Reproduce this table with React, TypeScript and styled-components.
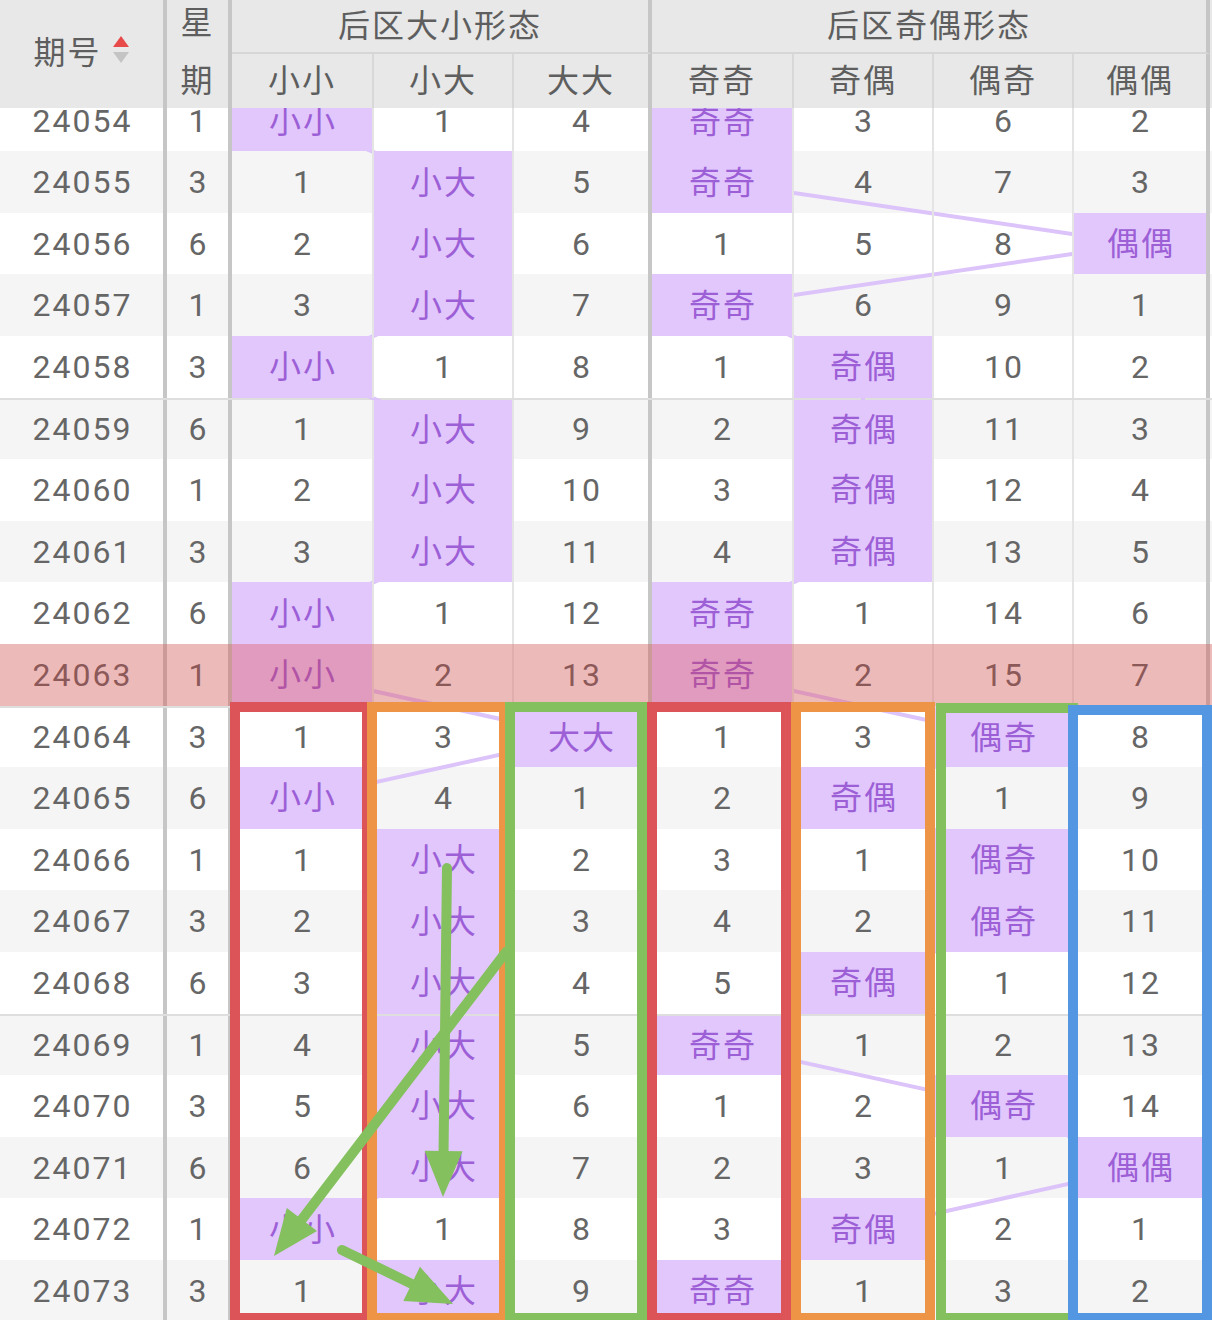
import React from "react";
import styled, { createGlobalStyle } from "styled-components";

const GlobalStyle = createGlobalStyle`
  html, body { margin: 0; padding: 0; background: #ffffff; }
  body { font-family: Roboto, "Noto Sans CJK SC", sans-serif; }
`;

type Divider = "thick" | "thin";
const COLS: { w: number; d: Divider }[] = [
  { w: 167, d: "thick" },
  { w: 65, d: "thick" },
  { w: 142, d: "thin" },
  { w: 140, d: "thin" },
  { w: 138, d: "thick" },
  { w: 142, d: "thin" },
  { w: 140, d: "thin" },
  { w: 140, d: "thin" },
  { w: 136, d: "thick" },
];
const bw = (d: Divider) => (d === "thick" ? 4 : 2);
const TEMPLATE = COLS.map((c) => `${c.w}px`).join(" ");
const LEFTS = COLS.reduce<number[]>((acc, c, i) => {
  acc.push(i === 0 ? 0 : acc[i - 1] + COLS[i - 1].w);
  return acc;
}, []);
const centerX = (ci: number) => LEFTS[ci] + (COLS[ci].w - bw(COLS[ci].d)) / 2;

const ROW_H = 61.6;
const LABELS = ["小小", "小大", "大大", "奇奇", "奇偶", "偶奇", "偶偶"];
const SUB_HEAD = LABELS;

const DATA: [number, number, number[]][] = [
  [24054, 1, [0, 1, 4, 0, 3, 6, 2]],
  [24055, 3, [1, 0, 5, 0, 4, 7, 3]],
  [24056, 6, [2, 0, 6, 1, 5, 8, 0]],
  [24057, 1, [3, 0, 7, 0, 6, 9, 1]],
  [24058, 3, [0, 1, 8, 1, 0, 10, 2]],
  [24059, 6, [1, 0, 9, 2, 0, 11, 3]],
  [24060, 1, [2, 0, 10, 3, 0, 12, 4]],
  [24061, 3, [3, 0, 11, 4, 0, 13, 5]],
  [24062, 6, [0, 1, 12, 0, 1, 14, 6]],
  [24063, 1, [0, 2, 13, 0, 2, 15, 7]],
  [24064, 3, [1, 3, 0, 1, 3, 0, 8]],
  [24065, 6, [0, 4, 1, 2, 0, 1, 9]],
  [24066, 1, [1, 0, 2, 3, 1, 0, 10]],
  [24067, 3, [2, 0, 3, 4, 2, 0, 11]],
  [24068, 6, [3, 0, 4, 5, 0, 1, 12]],
  [24069, 1, [4, 0, 5, 0, 1, 2, 13]],
  [24070, 3, [5, 0, 6, 1, 2, 0, 14]],
  [24071, 6, [6, 0, 7, 2, 3, 1, 0]],
  [24072, 1, [0, 1, 8, 3, 0, 2, 1]],
  [24073, 3, [1, 0, 9, 0, 1, 3, 2]],
];
const PINK_ROW = 24063;

const Page = styled.div`
  position: relative;
  width: 1212px;
  height: 1320px;
  overflow: hidden;
  background: #ffffff;
  font-size: 32px;
  letter-spacing: 2px;
  color: #666666;
`;

const Header = styled.div`
  position: relative;
  z-index: 5;
  display: grid;
  grid-template-columns: ${TEMPLATE};
  grid-template-rows: 54px 54px;
  background: #e8e8e8;
  color: #5e5e5e;
`;

const HeadCell = styled.div<{ $d: Divider; $col: string; $row: string; $bottom?: boolean }>`
  grid-column: ${(p) => p.$col};
  grid-row: ${(p) => p.$row};
  box-sizing: border-box;
  display: flex;
  align-items: center;
  justify-content: center;
  padding-bottom: 6px;
  border-right: ${(p) => (p.$d === "thick" ? "4px solid #c6c6c6" : "2px solid #d8d8d8")};
  border-bottom: ${(p) => (p.$bottom ? "2px solid #d6d6d6" : "none")};
  white-space: nowrap;
`;

const IssueHead = styled(HeadCell)`
  gap: 10px;
  padding-bottom: 8px;
`;

const WeekHead = styled(HeadCell)`
  flex-direction: column;
  gap: 26px;
  padding-bottom: 4px;
  line-height: 1;
`;

const Body = styled.div`
  position: relative;
  z-index: 0;
  isolation: isolate;
  margin-top: -18.4px;
`;

const TrendSvg = styled.svg`
  position: absolute;
  left: 0;
  top: 0;
  z-index: 1;
  pointer-events: none;
`;

const Row = styled.div<{ $alt: boolean; $sep: boolean }>`
  position: relative;
  box-sizing: border-box;
  display: grid;
  grid-template-columns: ${TEMPLATE};
  height: ${ROW_H}px;
  background: ${(p) => (p.$alt ? "#f5f5f5" : "#ffffff")};
  border-top: ${(p) => (p.$sep ? "2px solid #dedede" : "none")};
`;

const Cell = styled.div<{ $d: Divider; $hl?: boolean }>`
  position: relative;
  z-index: 2;
  box-sizing: border-box;
  display: flex;
  align-items: center;
  justify-content: center;
  padding-left: 2px;
  padding-bottom: ${(p) => (p.$hl ? "5px" : "0")};
  border-right: ${(p) => (p.$d === "thick" ? "4px solid #c6c6c6" : "2px solid #e4e4e4")};
  background: ${(p) => (p.$hl ? "#e2c7fd" : "transparent")};
  color: ${(p) => (p.$hl ? "#9d5fd6" : "#666666")};
`;

const PinkOverlay = styled.div`
  position: absolute;
  inset: 0;
  z-index: 3;
  background: rgba(220, 62, 62, 0.32);
  pointer-events: none;
`;

const Frame = styled.div<{ $color: string; $left: number; $top: number; $width: number }>`
  position: absolute;
  z-index: 8;
  box-sizing: border-box;
  left: ${(p) => p.$left}px;
  top: ${(p) => p.$top}px;
  width: ${(p) => p.$width}px;
  height: ${(p) => 1323 - p.$top}px;
  border: 10px solid ${(p) => p.$color};
  pointer-events: none;
`;

const ArrowSvg = styled.svg`
  position: absolute;
  left: 0;
  top: 0;
  z-index: 9;
  pointer-events: none;
`;

const SortIcon = () => (
  <svg width="18" height="30" viewBox="0 0 18 30">
    <polygon points="9,1 17,12 1,12" fill="#e84a4a" />
    <polygon points="1,17 17,17 9,28" fill="#c4c4c4" />
  </svg>
);

const FRAMES = [
  { c: "#dd5458", l: 230, t: 702, w: 142 },
  { c: "#ee9446", l: 367, t: 702, w: 142 },
  { c: "#84c05e", l: 505, t: 702, w: 142 },
  { c: "#dd5458", l: 647, t: 702, w: 144 },
  { c: "#ee9446", l: 791, t: 702, w: 144 },
  { c: "#84c05e", l: 936, t: 703, w: 142 },
  { c: "#5396e2", l: 1068, t: 705, w: 144 },
];

const ARROWS: [number, number, number, number][] = [
  [506, 952, 274, 1256],
  [447, 868, 443, 1197],
  [342, 1250, 453, 1304],
];

function Arrow({ s }: { s: [number, number, number, number] }) {
  const [x1, y1, x2, y2] = s;
  const dx = x2 - x1;
  const dy = y2 - y1;
  const len = Math.hypot(dx, dy);
  const ux = dx / len;
  const uy = dy / len;
  const L = 46;
  const H = 19;
  const bx = x2 - ux * L;
  const by = y2 - uy * L;
  const px = -uy;
  const py = ux;
  const pts = `${x2},${y2} ${bx + px * H},${by + py * H} ${bx - px * H},${by - py * H}`;
  return (
    <g>
      <line x1={x1} y1={y1} x2={bx + ux * 4} y2={by + uy * 4} stroke="#84c05e" strokeWidth={10} strokeLinecap="round" />
      <polygon points={pts} fill="#84c05e" />
    </g>
  );
}

function trendSegments() {
  const segs: { x1: number; y1: number; x2: number; y2: number }[] = [];
  const groups = [
    [0, 1, 2],
    [3, 4, 5, 6],
  ];
  groups.forEach((g) => {
    let prev: { x: number; y: number } | null = null;
    DATA.forEach(([, , v], ri) => {
      const idx = g.find((k) => v[k] === 0);
      if (idx === undefined) return;
      const pt = { x: centerX(idx + 2), y: ri * ROW_H + ROW_H / 2 };
      if (prev) segs.push({ x1: prev.x, y1: prev.y, x2: pt.x, y2: pt.y });
      prev = pt;
    });
  });
  return segs;
}

export default function App() {
  const segs = trendSegments();
  return (
    <Page>
      <GlobalStyle />
      <Header>
        <IssueHead $d="thick" $col="1" $row="1 / span 2">
          <span>期号</span>
          <SortIcon />
        </IssueHead>
        <WeekHead $d="thick" $col="2" $row="1 / span 2">
          <span>星</span>
          <span>期</span>
        </WeekHead>
        <HeadCell $d="thick" $col="3 / span 3" $row="1" $bottom>
          后区大小形态
        </HeadCell>
        <HeadCell $d="thick" $col="6 / span 4" $row="1" $bottom>
          后区奇偶形态
        </HeadCell>
        {SUB_HEAD.map((h, i) => (
          <HeadCell key={h} $d={COLS[i + 2].d === "thick" ? "thick" : "thin"} $col={`${i + 3}`} $row="2">
            {h}
          </HeadCell>
        ))}
      </Header>
      <Body>
        <TrendSvg width={1212} height={DATA.length * ROW_H}>
          {segs.map((s, i) => (
            <line key={i} x1={s.x1} y1={s.y1} x2={s.x2} y2={s.y2} stroke="#dcc3f9" strokeWidth={4} />
          ))}
        </TrendSvg>
        {DATA.map(([no, wk, vals], ri) => (
          <Row key={no} $alt={ri % 2 === 1} $sep={ri % 5 === 0}>
            <Cell $d="thick">{no}</Cell>
            <Cell $d="thick">{wk}</Cell>
            {vals.map((v, ci) => (
              <Cell key={ci} $d={COLS[ci + 2].d} $hl={v === 0}>
                {v === 0 ? LABELS[ci] : v}
              </Cell>
            ))}
            {no === PINK_ROW && <PinkOverlay />}
          </Row>
        ))}
      </Body>
      {FRAMES.map((f, i) => (
        <Frame key={i} $color={f.c} $left={f.l} $top={f.t} $width={f.w} />
      ))}
      <ArrowSvg width={1212} height={1320}>
        {ARROWS.map((a, i) => (
          <Arrow key={i} s={a} />
        ))}
      </ArrowSvg>
    </Page>
  );
}
